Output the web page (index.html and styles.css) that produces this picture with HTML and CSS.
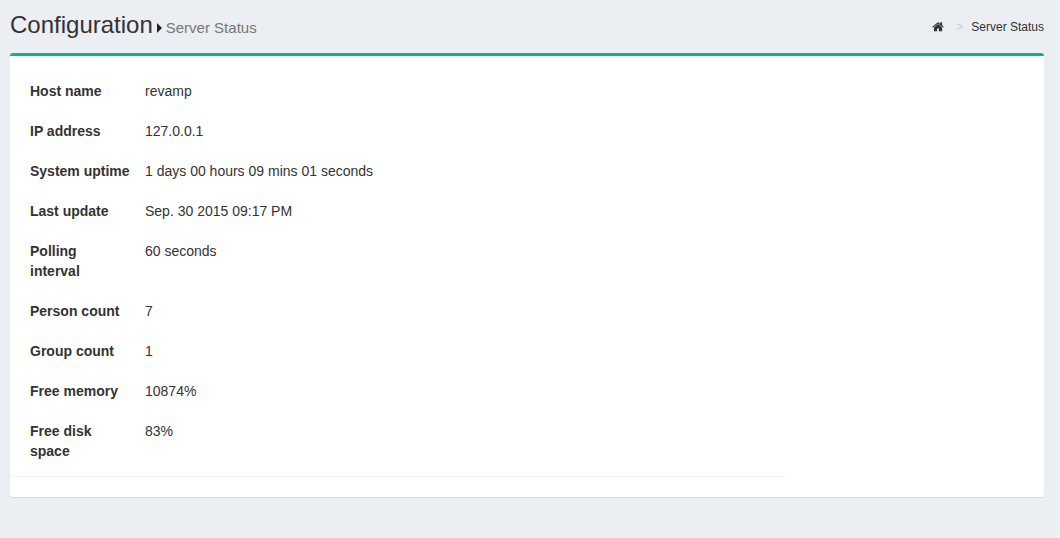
FILE: index.html
```html
<!DOCTYPE html>
<html lang="en">
<head>
<meta charset="utf-8">
<title>Server Status</title>
<link rel="stylesheet" href="styles.css">
</head>
<body>
<header class="page-header">
  <h1 class="title">Configuration
    <svg class="caret" viewBox="0 0 5 10" aria-hidden="true"><path d="M0 0.500L0.500 0.500L5 5L0.500 9.500L0 9.500z"/></svg>
    <small class="subtitle">Server Status</small>
  </h1>
  <nav class="breadcrumb" aria-label="Breadcrumb">
    <a class="home" href="#" aria-label="Home"><svg viewBox="0 0 1664 1408" aria-hidden="true"><path d="M1408 768v480q0 26-19 45t-45 19H960V928H704v384H320q-26 0-45-19t-19-45V768l1-6 575-474 575 474q1 2 1 6zm223-69-62 74q-8 9-21 11h-3q-13 0-21-7L832 200 140 777q-12 8-24 7-13-2-21-11l-62-74q-8-10-7-23.500t11-21.500L756 55q32-26 76-26t76 26l244 204V64q0-14 9-23t23-9h192q14 0 23 9t9 23v408l219 182q10 8 11 21.500t-7 23.500z"/></svg></a>
    <span class="separator">&gt;</span>
    <span>Server Status</span>
  </nav>
</header>
<main class="box">
  <dl class="details">
    <dt>Host name</dt><dd>revamp</dd>
    <dt>IP address</dt><dd>127.0.0.1</dd>
    <dt>System uptime</dt><dd>1 days 00 hours 09 mins 01 seconds</dd>
    <dt>Last update</dt><dd>Sep. 30 2015 09:17 PM</dd>
    <dt>Polling interval</dt><dd>60 seconds</dd>
    <dt>Person count</dt><dd>7</dd>
    <dt>Group count</dt><dd>1</dd>
    <dt>Free memory</dt><dd>10874%</dd>
    <dt>Free disk space</dt><dd>83%</dd>
  </dl>
</main>
</body>
</html>
```
FILE: styles.css
```css
* { box-sizing: border-box; }
body {
  margin: 0;
  padding: 10px 16px 40px 10px;
  background: #ebeef3;
  color: #333;
  font: 14px/20px "Liberation Sans", Arial, sans-serif;
}
.page-header {
  display: flex;
  justify-content: space-between;
  align-items: flex-start;
  padding-bottom: 10px;
}
.title {
  display: flex;
  align-items: baseline;
  gap: 4px;
  margin: 0;
  font-size: 24px;
  line-height: 30px;
  font-weight: 400;
}
.caret { width: 5px; height: 10px; fill: #222; }
.subtitle { color: #777; font-size: 15px; }
.breadcrumb {
  display: flex;
  align-items: center;
  padding-top: 7px;
  font-size: 12px;
}
.home { display: flex; color: #333; }
.home svg { width: 12px; height: 10px; fill: currentColor; }
.separator { padding: 0 8px 0 12px; color: #ccc; }
.box {
  padding: 15px 0 20px;
  background: #fff;
  border-top: 3px solid #00bc7b;
  border-radius: 3px;
  box-shadow: 0 1px 1px rgba(0, 0, 0, 0.1);
}
.details {
  display: grid;
  grid-template-columns: 100px 1fr;
  gap: 20px 15px;
  width: 75%;
  margin: 0;
  padding: 10px 20px 15px;
  border-bottom: 1px solid #f4f4f4;
}
.details dt { font-weight: 700; }
.details dd { margin: 0; }
```
